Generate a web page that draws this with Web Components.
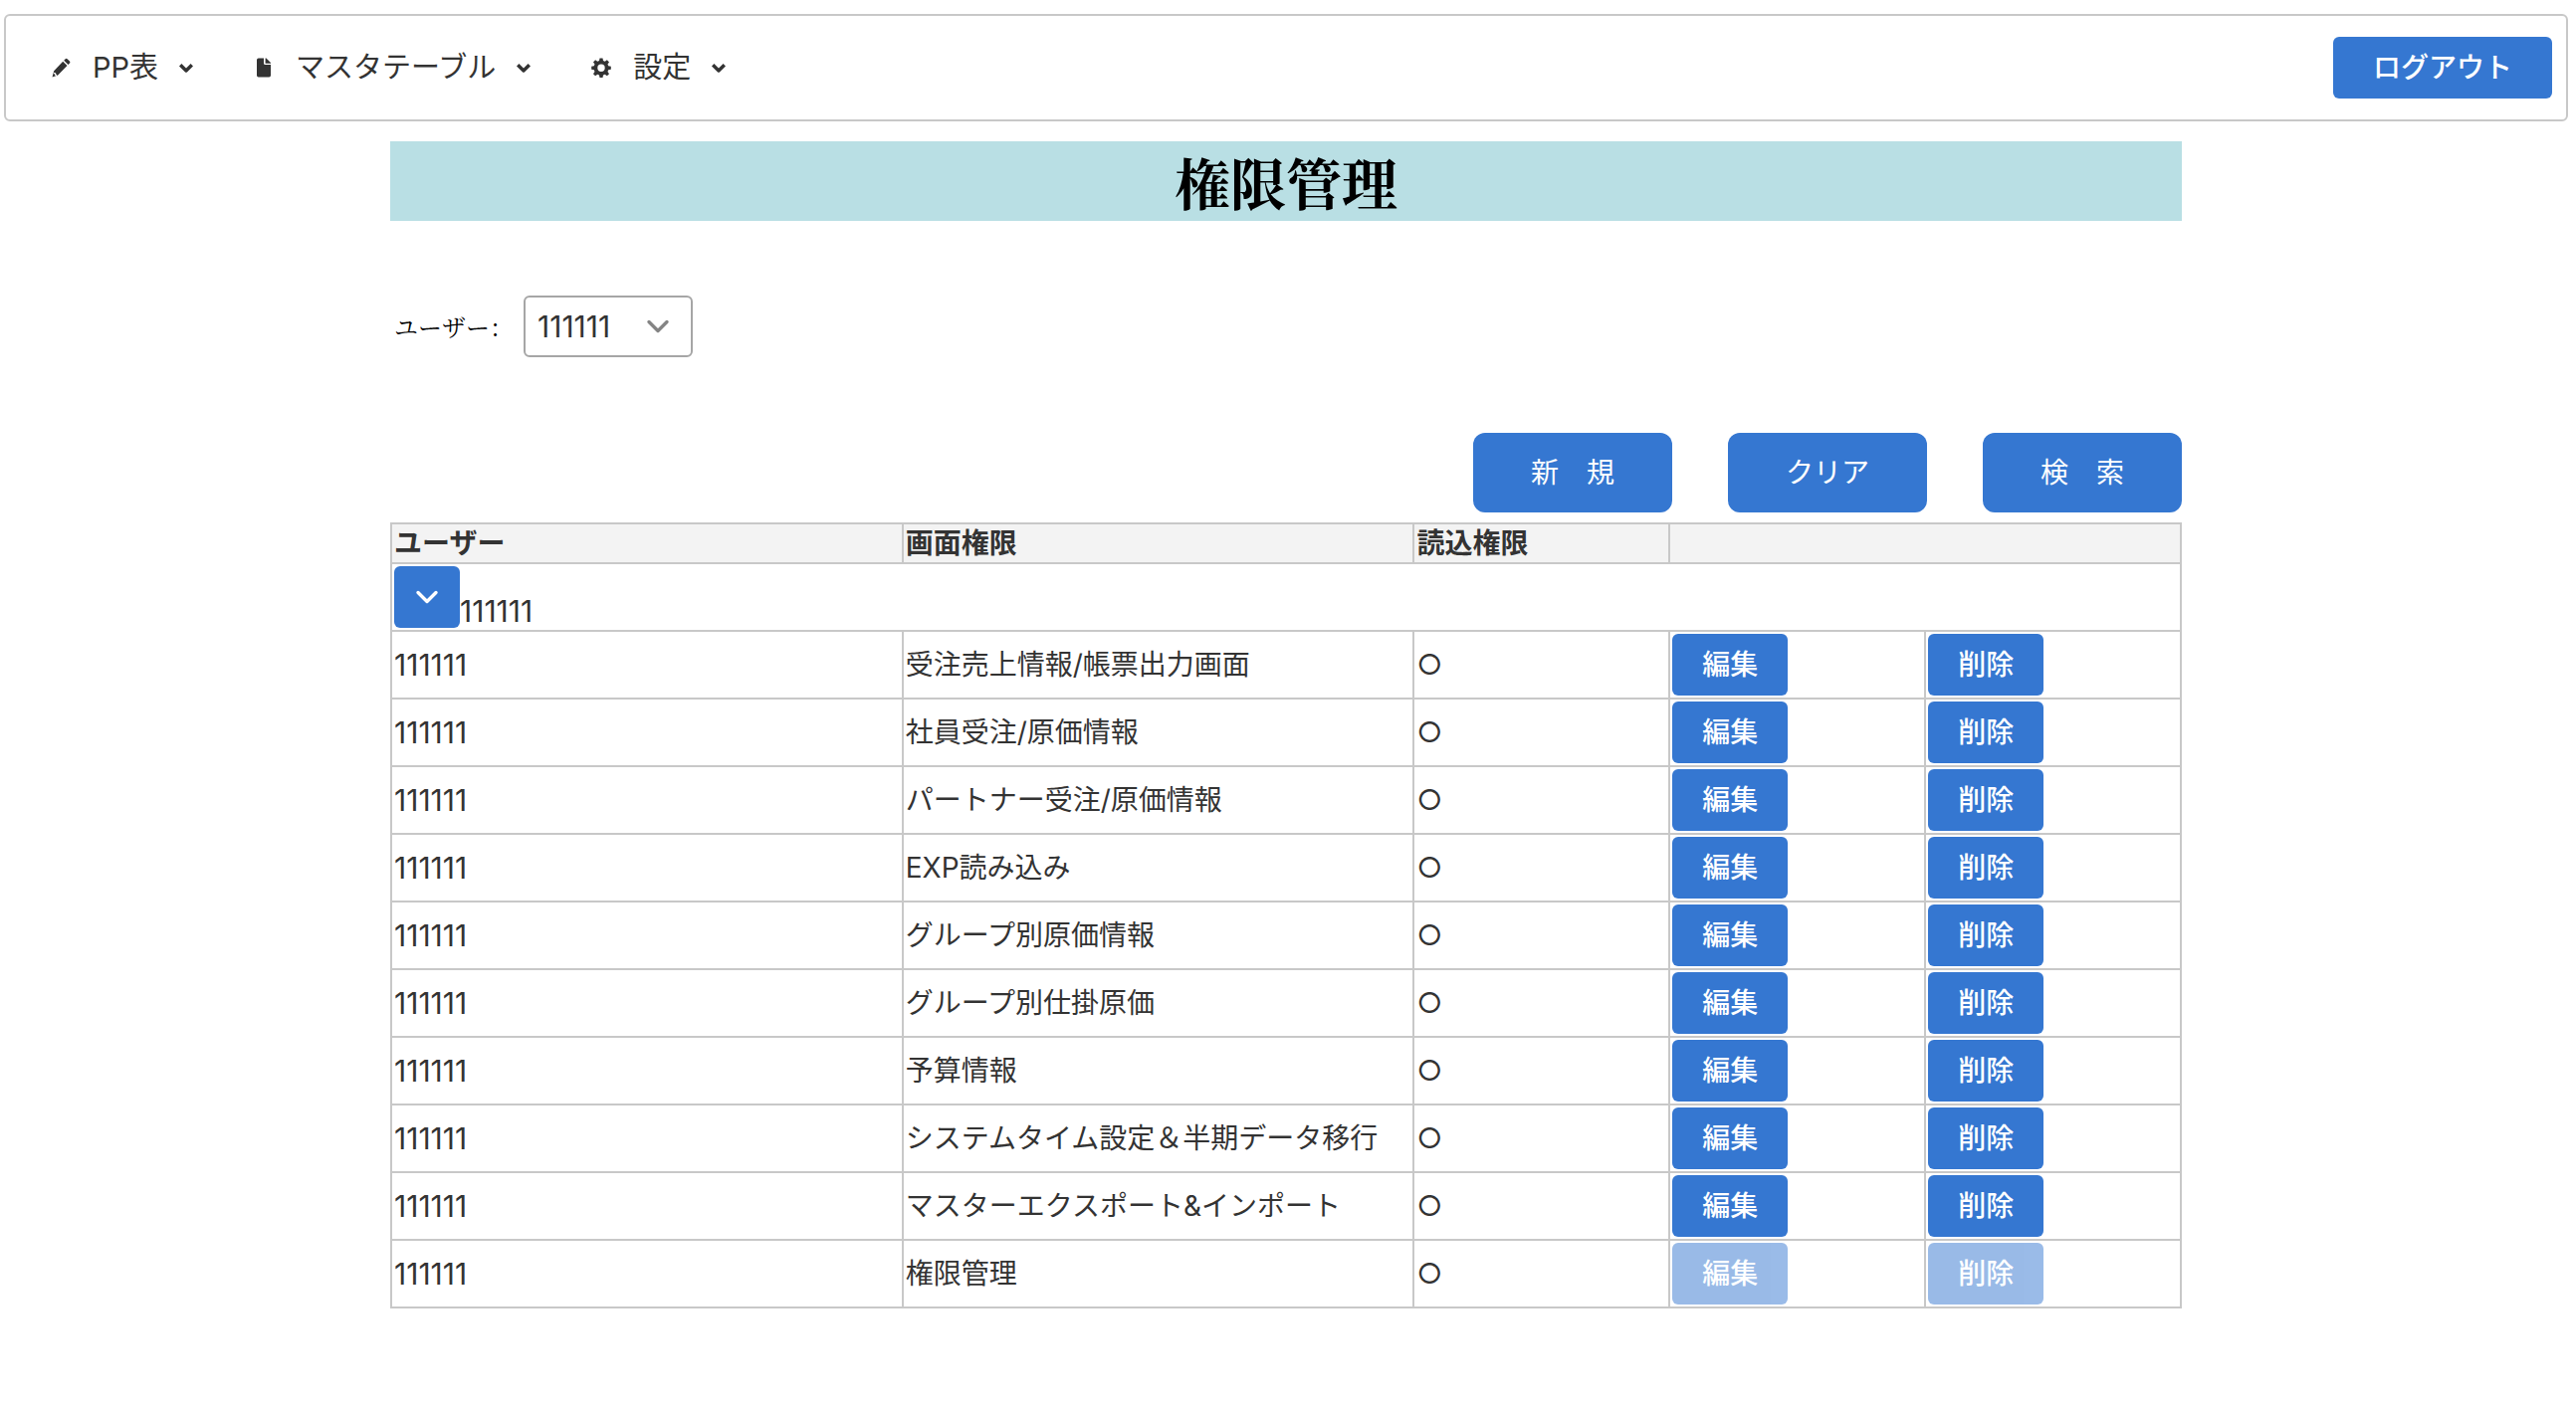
<!DOCTYPE html>
<html lang="ja">
<head>
<meta charset="utf-8">
<title>権限管理</title>
<style>
  body {
    margin: 0;
    padding: 14px 8px 40px 4px;
    background: #fff;
    color: #333;
    font-family: Inter, "Noto Sans CJK JP", sans-serif;
    font-size: 28px;
    line-height: 34px;
  }
</style>
</head>
<body>
<permission-page></permission-page>
<script>
const BLUE = '#3577d1';

const ICONS = {
  pencil: '<path fill="currentColor" d="M5.200 15.200 14.200 5.800l4.300 4.100-9.300 9.700-5.700 1.900zM15.200 4.800l1.500-1.600q.9-.9 1.900 0l2.400 2.300q.9.9 0 1.900l-1.500 1.500z"/><path d="M5 17.600l1.500.1.200 1.600 1.300.1" fill="none" stroke="#fff" stroke-width="1.200"/>',
  file: '<path fill="currentColor" d="M5 4.200q0-1.700 1.700-1.700H12v5q0 1.500 1.500 1.500H19v10.800q0 1.700-1.700 1.700H6.700Q5 21.500 5 19.800zM13.600 2.500h.9L19 7v.7h-5.400z"/>',
  cog: '<path fill="currentColor" fill-rule="evenodd" d="M10.500 2.500h3l.5 2.600 1.700.7 2.200-1.500 2.100 2.100-1.500 2.200.7 1.700 2.600.5v3l-2.600.5-.7 1.700 1.500 2.200-2.100 2.100-2.200-1.500-1.700.7-.5 2.600h-3l-.5-2.600-1.700-.7-2.200 1.500L4 18.200l1.500-2.200-.7-1.700-2.600-.5v-3l2.600-.5.7-1.700L4 6.400l2.100-2.100 2.200 1.500 1.700-.7zM12 8.500a3.700 3.700 0 1 0 0 7.400 3.700 3.700 0 0 0 0-7.400z"/>',
  down: '<path fill="none" stroke="currentColor" stroke-width="3.400" stroke-linejoin="round" d="M6.200 9.200l5.800 5.800 5.800-5.800"/>',
  chevron: '<path fill="none" stroke="currentColor" stroke-width="3.400" stroke-linecap="round" stroke-linejoin="round" d="M3 7.500l9 9 9-9"/>'
};

function define(name, html, setup, observed = []) {
  const template = document.createElement('template');
  template.innerHTML = html;
  customElements.define(name, class extends HTMLElement {
    static observedAttributes = observed;
    constructor() {
      super();
      this.attachShadow({ mode: 'open' }).append(template.content.cloneNode(true));
    }
    connectedCallback() { if (setup) setup(this, this.shadowRoot); }
    attributeChangedCallback() { if (setup) setup(this, this.shadowRoot); }
  });
}

define('ui-icon', `<style>
  :host { display: inline-flex; width: 28px; justify-content: center; }
  svg { width: 24px; height: 24px; display: block; }
</style><svg viewBox="0 0 24 24" aria-hidden="true"></svg>`, (el, root) => {
  root.querySelector('svg').innerHTML = ICONS[el.getAttribute('name')] || '';
}, ['name']);

define('ui-button', `<style>
  :host { display: inline-block; vertical-align: top; }
  button {
    display: flex; align-items: center; justify-content: center;
    width: 100%; height: 62px; margin: 0; padding: 0 30px;
    border: 0; border-radius: 6px; background: ${BLUE}; color: #fff;
    font: inherit; font-weight: 500; cursor: pointer;
  }
  button:disabled { opacity: .5; cursor: default; }
  :host([kind="wide"]) button { padding: 0 40px; }
  :host([kind="icon"]) button { padding: 0 19px; }
  :host([kind="large"]) { width: 200px; }
  :host([kind="large"]) button { height: 80px; border-radius: 12px; font-weight: 400; }
</style><button type="button"><slot></slot></button>`, (el, root) => {
  const button = root.querySelector('button');
  button.disabled = el.hasAttribute('disabled');
  if (el.hasAttribute('label')) button.setAttribute('aria-label', el.getAttribute('label'));
}, ['disabled', 'label']);

define('menu-item', `<style>
  :host { display: block; font-size: 29px; }
  a { display: flex; align-items: center; color: inherit; text-decoration: none; }
  span { margin: 0 14px 0 18px; white-space: nowrap; }
</style><a href="#"><ui-icon class="lead"></ui-icon><span><slot></slot></span><ui-icon name="down"></ui-icon></a>`, (el, root) => {
  root.querySelector('.lead').setAttribute('name', el.getAttribute('icon'));
}, ['icon']);

define('menu-bar', `<style>
  :host { display: block; }
  nav {
    display: flex; align-items: center; gap: 50px; box-sizing: border-box; height: 108px;
    padding: 0 14px 0 41px; border: 2px solid #c8c8c8; border-radius: 6px;
  }
  ::slotted([slot="end"]) { margin-left: auto; }
</style><nav><slot></slot><slot name="end"></slot></nav>`);

define('page-title', `<style>
  :host { display: block; }
  h1 {
    margin: 0; background: #b9dfe4; color: #000; text-align: center;
    font: bold 56px/80px "Noto Serif CJK JP", "Noto Sans CJK JP", serif;
  }
</style><h1><slot></slot></h1>`);

define('user-filter', `<style>
  :host { display: flex; align-items: center; gap: 10px; padding-left: 4px; }
  label { color: #000; font: 24px/34px "Noto Serif CJK SC", "Noto Sans CJK SC", serif; }
  .box { display: grid; align-items: center; }
  select, ui-icon { grid-area: 1 / 1; }
  select {
    appearance: none; box-sizing: border-box; width: 170px; height: 62px; padding: 0 12px;
    border: 2px solid #a6a6a6; border-radius: 6px; background: #fff; color: inherit;
    font: inherit; font-size: 30px;
  }
  ui-icon { justify-self: end; margin-right: 21px; color: #848484; pointer-events: none; }
</style><label for="user" lang="zh-CN">ユーザー：</label><div class="box"><select id="user"><option>111111</option></select><ui-icon name="chevron"></ui-icon></div>`);

const SCREENS = [
  '受注売上情報/帳票出力画面', '社員受注/原価情報', 'パートナー受注/原価情報', 'EXP読み込み',
  'グループ別原価情報', 'グループ別仕掛原価', '予算情報', 'システムタイム設定＆半期データ移行',
  'マスターエクスポート&amp;インポート', '権限管理'
];

define('permission-table', `<style>
  :host { display: block; }
  table { width: 100%; border-collapse: collapse; table-layout: fixed; }
  th, td { border: 2px solid #c8c8c8; padding: 2px; text-align: left; white-space: nowrap; }
  th { background: #f3f3f3; font-weight: 700; }
  .half { width: 14.2857%; }
  .full { width: 28.5714%; }
  .group { display: flex; align-items: flex-end; }
  .id { font-size: 30px; }
</style><table>
  <colgroup><col class="full"><col class="full"><col class="half"><col class="half"><col class="half"></colgroup>
  <thead><tr><th>ユーザー</th><th>画面権限</th><th>読込権限</th><th colspan="2"></th></tr></thead>
  <tbody>
    <tr><td colspan="5"><div class="group"><ui-button kind="icon" label="開閉"><ui-icon name="chevron"></ui-icon></ui-button><span class="id">111111</span></div></td></tr>
    ${SCREENS.map((name, i) => {
      const off = i === SCREENS.length - 1 ? ' disabled' : '';
      return `<tr><td class="id">111111</td><td>${name}</td><td>○</td><td><ui-button${off}>編集</ui-button></td><td><ui-button${off}>削除</ui-button></td></tr>`;
    }).join('')}
  </tbody>
</table>`);

define('permission-page', `<style>
  :host { display: block; }
  main { width: 70%; max-width: 1800px; margin: 20px auto 0; }
  user-filter { margin-top: 75px; }
  .actions { display: flex; justify-content: flex-end; gap: 56px; margin: 76px 0 10px; }
</style>
<menu-bar>
  <menu-item icon="pencil">PP表</menu-item>
  <menu-item icon="file">マスタテーブル</menu-item>
  <menu-item icon="cog">設定</menu-item>
  <ui-button slot="end" kind="wide">ログアウト</ui-button>
</menu-bar>
<main>
  <page-title>権限管理</page-title>
  <user-filter></user-filter>
  <div class="actions">
    <ui-button kind="large">新　規</ui-button>
    <ui-button kind="large">クリア</ui-button>
    <ui-button kind="large">検　索</ui-button>
  </div>
  <permission-table></permission-table>
</main>`);
</script>
</body>
</html>
